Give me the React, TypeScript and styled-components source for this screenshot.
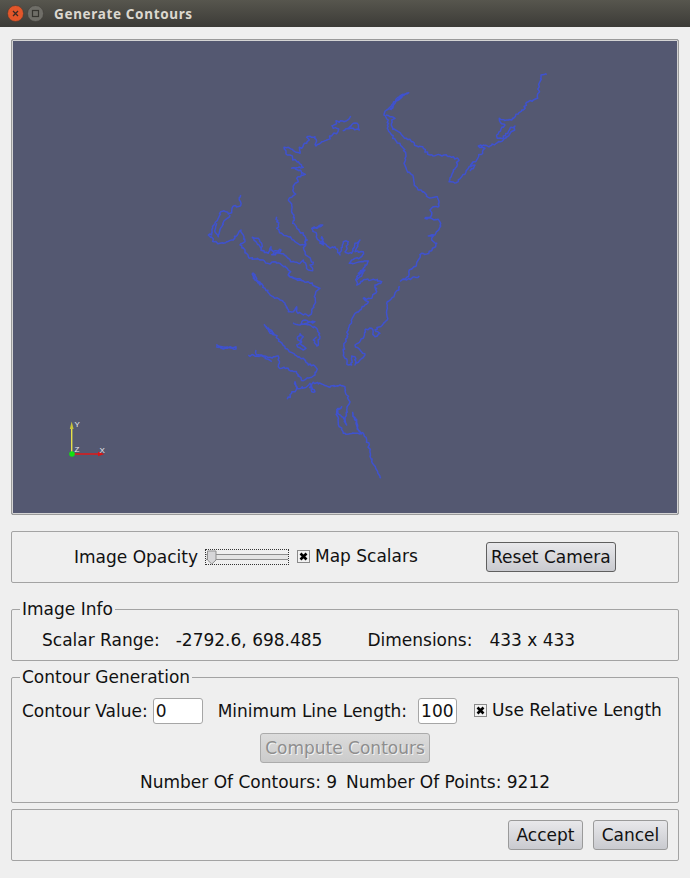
import React from "react";
import styled, { createGlobalStyle } from "styled-components";

const GlobalStyle = createGlobalStyle`
  html, body { margin: 0; padding: 0; background: #efefef; }
  * { box-sizing: border-box; }
`;

const Window = styled.div`
  width: 690px;
  height: 878px;
  background: #efefef;
  color: #111;
  font-family: "DejaVu Sans", sans-serif;
  font-size: 17px;
  line-height: 20px;
  overflow: hidden;
`;

const TitleBar = styled.div`
  height: 27px;
  display: flex;
  align-items: center;
  padding: 0 0 0 7px;
  background: linear-gradient(#57564e, #3c3b37);
`;

const TitleText = styled.span`
  margin-left: 7px;
  font-family: "Noto Sans", sans-serif;
  font-weight: 700;
  font-size: 13.5px;
  letter-spacing: 0.65px;
  color: #dcd8cf;
`;

const WinButton = styled.svg`
  display: block;
  margin-right: 3px;
`;

const Content = styled.div`
  padding: 12px 11px 0;
`;

const Viewport = styled.div`
  height: 476px;
  border: 1px solid #9a9a9a;
  box-shadow: inset 0 0 0 1px #d4d4d4;
  background: #545871;
  padding: 1px;
  border-radius: 2px;
`;

const ViewSvg = styled.svg`
  display: block;
  width: 100%;
  height: 100%;
`;

const Panel = styled.div<{ $top: number }>`
  margin-top: ${(p) => p.$top}px;
  height: 52px;
  border: 1px solid #a3a3a3;
  border-radius: 2px;
  display: flex;
  align-items: center;
`;

const Group = styled.fieldset<{ $top: number; $height: number }>`
  margin: ${(p) => p.$top}px 0 0;
  padding: 0 10px;
  height: ${(p) => p.$height}px;
  min-width: 0;
  border: 1px solid #a3a3a3;
  border-radius: 2px;
`;

const Legend = styled.legend`
  margin-left: -2px;
  padding: 0 2px;
  line-height: 20px;
`;

const Row = styled.div<{ $left?: number; $top?: number; $center?: boolean }>`
  display: flex;
  align-items: center;
  padding-left: ${(p) => p.$left ?? 0}px;
  margin-top: ${(p) => p.$top ?? 0}px;
  justify-content: ${(p) => (p.$center ? "center" : "flex-start")};
`;

const Label = styled.span<{ $left?: number; $raised?: boolean }>`
  margin-left: ${(p) => p.$left ?? 0}px;
  margin-bottom: ${(p) => (p.$raised ? 2 : 0)}px;
  white-space: nowrap;
`;

const PushButton = styled.button<{ $width: number; $left?: number; $strong?: boolean }>`
  width: ${(p) => p.$width}px;
  height: 30px;
  margin-left: ${(p) => p.$left ?? 0}px;
  padding: 0;
  font: inherit;
  color: #111;
  border: 1px solid ${(p) => (p.$strong ? "#5f5f5f" : "#9a9a9a")};
  border-radius: 3px;
  background: linear-gradient(#e8e8eb, #c9cacf);
  white-space: nowrap;
  &:disabled {
    color: #8e8e8e;
    text-shadow: 1px 1px 0 #f2f2f2;
    border-color: #ababab;
    background: linear-gradient(#dcdcdc, #cbcbcb);
  }
`;

const Field = styled.div<{ $width: number; $left: number }>`
  width: ${(p) => p.$width}px;
  height: 26px;
  margin-left: ${(p) => p.$left}px;
  padding-left: 2px;
  display: flex;
  align-items: center;
  background: #fff;
  border: 1px solid #a6a6a6;
  border-radius: 3px;
`;

const Slider = styled.div`
  position: relative;
  width: 84px;
  height: 16px;
  margin-left: 7px;
  border: 1px dotted #333;
  display: flex;
  align-items: center;
`;

const Groove = styled.div`
  width: 100%;
  height: 6px;
  border-top: 1px solid #8d8d8d;
  border-bottom: 1px solid #8d8d8d;
  background: #e4e4e4;
`;

const Handle = styled.svg`
  position: absolute;
  left: 0;
  top: 0;
`;

const CheckMark = styled.svg<{ $left: number }>`
  display: block;
  flex: none;
  margin-left: ${(p) => p.$left}px;
  margin-bottom: 2px;
`;

const Check = ({ left }: { left: number }) => (
  <CheckMark $left={left} width="13" height="13" viewBox="0 0 13 13">
    <rect x="0.5" y="0.5" width="12" height="12" fill="#f2f2f2" stroke="#8a8a8a" />
    <path d="M3.5 3.5 L9.5 9.5 M9.5 3.5 L3.5 9.5" stroke="#000" strokeWidth="2.6" />
  </CheckMark>
);

// traced from the picture: [offset x, offset y, zoomed points]
const Z2 = [200, 60];
const Z3 = [370, 60];
const Z4 = [200, 270];

type Contour = { o: number[]; d: string };

const contours: Contour[] = [
  { o: Z2, d: "452,168 440,182 428,183 418,187 408,182 408,192 396,197 400,205 416,207 414,215 395,228 380,240 365,245 358,252 348,258 345,230 335,232 320,232 328,240 320,250 310,255 305,265 298,262 300,280 285,275 280,272 265,262 252,262 258,272 258,282 270,285 278,295 278,300 295,305 310,322 275,325 300,330 305,340 316,343 290,355 295,365 282,375 280,395 287,402 275,412 265,420 275,432 275,450 282,465 278,490 290,505 310,525 322,540 315,548 312,570 325,590 340,607 330,615 338,632 325,630 310,600 300,610 272,605 258,588 240,580 215,584 243,570 220,575 213,560 205,580 186,572 185,550 175,535 157,532 168,545 180,560 182,572" },
  { o: Z2, d: "428,212 445,205 460,190 472,190 478,210 460,205 440,205" },
  { o: Z2, d: "122,405 118,420 122,437 98,440 95,458 85,462 72,452 62,455 55,475 45,490 38,505 35,525 25,525 45,545 60,550 80,545 100,540 115,520 123,510 132,530 135,545 120,555 135,570 145,590 165,597 190,600 210,612 222,605 245,615 262,625 272,635 265,645 285,655 305,660" },
  { o: Z2, d: "50,490 45,515 55,530 65,500 75,480 90,465" },
  { o: Z4, d: "270,5 265,15 280,25 300,30 330,40 360,55 345,75 345,100 335,120 330,135 310,135 290,125 290,110 280,125 265,125 255,100 240,90 220,80 195,55 175,35 160,25 158,8" },
  { o: Z2, d: "230,470 235,495 230,505 245,520 270,530 285,545 300,555 312,555 320,540" },
  { o: Z2, d: "335,505 368,495 350,505 335,505 350,525 360,550 370,555 365,530 372,550 390,565 405,560 420,585 430,545 445,545 435,575 455,580 465,550 480,540 465,575 490,575 485,590 455,600 448,610 490,605 505,603 490,625 475,640 495,630 480,650 470,660" },
  { o: Z4, d: "490,0 470,20 470,45 490,30 520,28 545,35 525,45 530,65 515,85 490,85 505,95 480,120 465,130 455,155 445,175 440,205 432,225 432,260 445,285 455,285 455,258 465,260 465,285 480,270 495,255 480,240 465,225 490,205 495,180 515,175 525,200 540,190 525,180 562,150 560,100 585,70 600,50" },
  { o: Z3, d: "90,664 115,650 118,630 135,620 145,600 155,580 170,582 185,572 200,550 185,540 190,528 175,528 195,525 208,505 212,490 205,478 165,475 185,465 180,450 190,440 207,438 202,410 175,412 160,395 145,390 133,370 130,350 110,330 102,310 108,290 100,265 80,245 65,225 52,205 55,180 42,165 50,150 65,135 78,118 90,108 118,97" },
  { o: Z3, d: "48,165 60,170 75,175 65,180 68,208 85,215 110,235 128,245 140,258 160,265 180,285 210,285 222,285 245,292 265,297 260,320 245,345 237,365 258,368 275,350 295,325 310,305 320,300 345,265 325,258 360,258 400,240 430,212 435,198 420,205 400,235 382,235 380,225 405,195 390,185 388,175 410,180 425,180 445,162 460,150 475,125 490,120 503,115 508,80 513,45 530,44" },
  { o: Z3, d: "310,305 300,320 315,315 300,333" },
  { o: Z3, d: "98,658 125,655 148,648" },
  { o: Z3, d: "60,150 85,118 105,103 75,130 62,150" },
  { o: Z4, d: "280,158 300,165 320,160 345,155 315,150 300,165 330,165 350,175 360,200 350,228 340,210 350,200" },
  { o: Z4, d: "300,190 292,205 305,215 290,225 310,240 318,235 300,220 310,200 300,190" },
  { o: Z4, d: "192,163 205,180 225,195 240,215 265,240 285,255 310,265 325,285 340,285 352,298 345,315 310,332 290,310 265,295 245,295 235,290 235,258 210,262 190,258 170,255 168,240" },
  { o: Z4, d: "198,168 210,190 222,192 205,172" },
  { o: Z4, d: "145,255 170,258 190,260 215,275" },
  { o: Z4, d: "262,388 275,370 290,355 285,335 290,355 320,350 330,340 335,365 345,365 335,350 340,337 365,342 385,350 420,345 435,350 440,375 450,395 440,420 435,445 440,465 425,440 410,420 425,410 410,425 415,460 430,490 475,490 490,490 500,510 510,540 515,575 530,600 542,625" },
  { o: Z4, d: "458,425 470,455 475,480 485,492 478,485 468,458 460,430" },
  { o: Z4, d: "48,225 75,232 108,230 108,237 75,235 48,230" },
  { o: Z4, d: "158,8 165,30 180,45 170,25 160,12" },
];

// break a traced line into short steps with small steady wobble, like a real contour
const wobble = ({ o, d }: Contour, seed: number) => {
  const pts = d.split(" ").map((s) => {
    const [x, y] = s.split(",").map(Number);
    return [o[0] + x / 3, o[1] + y / 3];
  });
  let n = seed * 97 + 13;
  const rnd = () => {
    n = (n * 9301 + 49297) % 233280;
    return n / 233280 - 0.5;
  };
  const out: string[] = [];
  pts.forEach((p, i) => {
    if (i > 0) {
      const q = pts[i - 1];
      const len = Math.hypot(p[0] - q[0], p[1] - q[1]);
      const steps = Math.floor(len / 1.6);
      for (let k = 1; k < steps; k++) {
        const t = k / steps;
        out.push(`${(q[0] + (p[0] - q[0]) * t + rnd() * 2.2).toFixed(1)},${(q[1] + (p[1] - q[1]) * t + rnd() * 2.2).toFixed(1)}`);
      }
    }
    out.push(`${p[0].toFixed(1)},${p[1].toFixed(1)}`);
  });
  return out.join(" ");
};

const AxisText = styled.text`
  font-family: "Liberation Sans", sans-serif;
  font-size: 8px;
  fill: #e8e8ee;
`;

const Scene = () => (
  <ViewSvg viewBox="13 41 664 472" preserveAspectRatio="none">
    {contours.map((c, i) => (
      <polyline key={i} points={wobble(c, i)} fill="none" stroke="#3f52cf" strokeWidth="1.5" strokeLinejoin="round" />
    ))}
    <line x1="71.7" y1="454" x2="71.7" y2="427" stroke="#e6e04a" strokeWidth="1.4" />
    <polygon points="69.8,429 73.6,429 71.7,421.5" fill="#c9c43a" />
    <line x1="72" y1="454" x2="99" y2="454" stroke="#e01818" strokeWidth="1.5" />
    <polygon points="98,451.8 98,456.2 104.5,454" fill="#d81616" />
    <circle cx="72" cy="454" r="2.8" fill="#12e012" />
    <AxisText x="74.5" y="427">Y</AxisText>
    <AxisText x="74.5" y="452">Z</AxisText>
    <AxisText x="99.5" y="453">X</AxisText>
  </ViewSvg>
);

export default function App() {
  return (
    <Window>
      <GlobalStyle />
      <TitleBar>
        <WinButton width="17" height="17" viewBox="0 0 17 17">
          <circle cx="8.5" cy="8.5" r="8" fill="#e2562a" stroke="#4a3a30" strokeWidth="0.6" />
          <path d="M6 6 L11 11 M11 6 L6 11" stroke="#3a2a24" strokeWidth="1.3" />
        </WinButton>
        <WinButton width="17" height="17" viewBox="0 0 17 17">
          <circle cx="8.5" cy="8.5" r="8" fill="#6f6e68" stroke="#3f3e39" strokeWidth="0.6" />
          <rect x="5.5" y="5.5" width="6" height="6" fill="none" stroke="#35342f" strokeWidth="1.2" />
        </WinButton>
        <TitleText>Generate Contours</TitleText>
      </TitleBar>
      <Content>
        <Viewport>
          <Scene />
        </Viewport>
        <Panel $top={16}>
          <Label $left={62}>Image Opacity</Label>
          <Slider>
            <Groove />
            <Handle width="12" height="15" viewBox="0 0 12 15">
              <path d="M1.5 1 H10 V10 L5.8 14 L1.5 10 Z" fill="#d6d6d8" stroke="#8f8f8f" />
            </Handle>
          </Slider>
          <Check left={8} />
          <Label $left={5} $raised>Map Scalars</Label>
          <PushButton $width={130} $left={68} $strong>Reset Camera</PushButton>
        </Panel>
        <Group $top={16} $height={62}>
          <Legend>Image Info</Legend>
          <Row $left={20} $top={11}>
            <Label>Scalar Range:</Label>
            <Label $left={16}>-2792.6, 698.485</Label>
            <Label $left={45}>Dimensions:</Label>
            <Label $left={17}>433 x 433</Label>
          </Row>
        </Group>
        <Group $top={6} $height={136}>
          <Legend>Contour Generation</Legend>
          <Row $top={11}>
            <Label>Contour Value:</Label>
            <Field $width={50} $left={5}>0</Field>
            <Label $left={15}>Minimum Line Length:</Label>
            <Field $width={39} $left={11}>100</Field>
            <Check left={17} />
            <Label $left={5} $raised>Use Relative Length</Label>
          </Row>
          <Row $center $top={9}>
            <PushButton $width={170} disabled>Compute Contours</PushButton>
          </Row>
          <Row $center $top={9}>
            <Label>Number Of Contours: 9</Label>
            <Label $left={9}>Number Of Points: 9212</Label>
          </Row>
        </Group>
        <Panel $top={6}>
          <PushButton $width={75} $left={496}>Accept</PushButton>
          <PushButton $width={75} $left={10}>Cancel</PushButton>
        </Panel>
      </Content>
    </Window>
  );
}
